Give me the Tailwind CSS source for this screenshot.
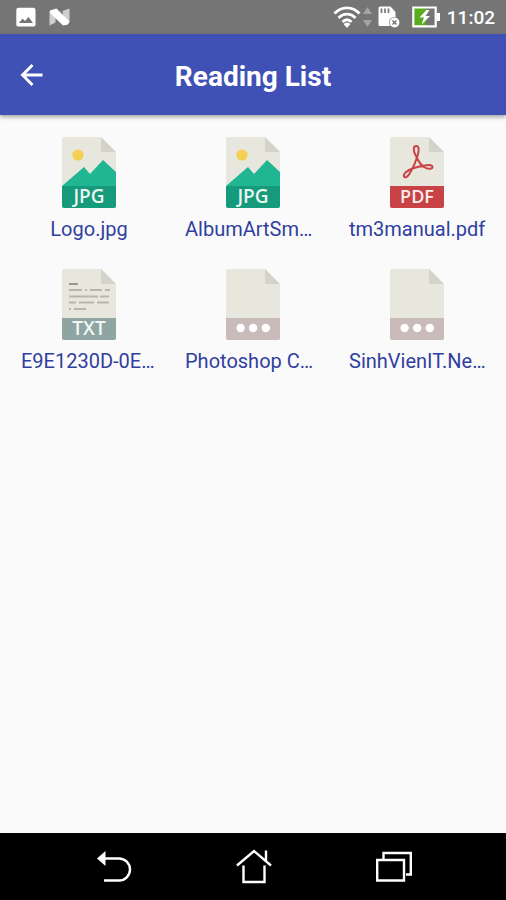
<!DOCTYPE html>
<html lang="en">
<head>
<meta charset="utf-8">
<meta name="viewport" content="width=device-width, initial-scale=1">
<title>Reading List</title>
<script src="https://cdn.jsdelivr.net/npm/@tailwindcss/browser@4"></script>
</head>
<body class="flex min-h-screen flex-col bg-[#fafafa] font-[Roboto,sans-serif]">
<svg class="hidden" aria-hidden="true">
  <symbol id="page" viewBox="0 0 54 71">
    <path fill="#e7e7de" d="M2 0H39L54 15V69a2 2 0 0 1-2 2H2a2 2 0 0 1-2-2V2a2 2 0 0 1 2-2z"/>
    <path fill="#d3d3c9" d="M39 0L54 15H41a2 2 0 0 1-2-2z"/>
  </symbol>
  <symbol id="band" viewBox="0 0 54 71">
    <path fill="currentColor" d="M0 49H54V69a2 2 0 0 1-2 2H2a2 2 0 0 1-2-2z"/>
  </symbol>
  <symbol id="jpg" viewBox="0 0 54 71">
    <use href="#page"/>
    <circle cx="16" cy="18" r="5.6" fill="#f4cf52"/>
    <path fill="#21b692" d="M0 49L22 30L28 37L41 23L54 35V50H0z"/>
    <use href="#band" color="#159a7b"/>
  </symbol>
  <symbol id="other" viewBox="0 0 54 71">
    <use href="#page"/>
    <use href="#band" color="#c8bbb9"/>
    <g fill="#fff"><circle cx="14.6" cy="59" r="4.2"/><circle cx="27.2" cy="59" r="4.2"/><circle cx="39.8" cy="59" r="4.2"/></g>
  </symbol>
</svg>

<div class="flex h-[34px] items-center justify-between bg-[#757575] pr-[11px] pl-4 text-white">
  <div class="flex items-center gap-[13px]">
    <svg class="h-5 w-5" viewBox="0 0 20 20"><rect x="0.3" y="0.8" width="19.2" height="18.8" rx="2.2" fill="#fff"/><path fill="#757575" d="M3 16L6.5 11.5L9 14L12.5 10L17 16z"/></svg>
    <svg class="h-[18px] w-[22px]" viewBox="0 0 22 18"><path fill="#cfcfcf" d="M0.5 3L6.5 6V14.500L0.5 17.500zM13.500 3L20.5 0.5V14L15 14z"/><path fill="#fff" d="M1 2.500L7.5 0.5L20.5 13.500L19 16.500L14 17.500L1 5z"/></svg>
  </div>
  <div class="flex items-center">
    <svg class="h-6 w-7" viewBox="0 0 28 24" fill="none" stroke="#fff" stroke-width="2.9"><path d="M1.5 8.5C8.500 1 19.500 1 26.500 8.500M5.500 13C10.500 7.800 17.500 7.800 22.500 13M9.500 17C12.500 14 15.500 14 18.500 17"/><path fill="#fff" stroke="none" d="M10.500 19Q14 16 17.500 19L14 23z"/></svg>
    <svg class="ml-[2px] h-[22px] w-[9px]" viewBox="0 0 9 22" fill="#a3a3a3"><path d="M4.500 1L9 8H0zM4.500 21L0 14H9z"/></svg>
    <svg class="ml-[6px] h-[22px] w-[22px]" viewBox="0 0 22 22"><path fill="#fff" d="M2 0.500H12.500L17.500 6V20H2A1.500 1.500 0 0 1 0.500 18.500V2A1.500 1.500 0 0 1 2 0.500z"/><path stroke="#757575" stroke-width="1.700" d="M3.500 2.500V7M7 2.500V7M10.500 2.500V7"/><circle cx="16.500" cy="16.500" r="5.500" fill="#757575"/><circle cx="16.500" cy="16.500" r="4.900" fill="#fff"/><path stroke="#757575" stroke-width="1.500" d="M14.500 14.500L18.500 18.500M18.500 14.500L14.500 18.500"/></svg>
    <svg class="ml-3 h-[22px] w-7" viewBox="0 0 28 22"><path fill="#58ac1d" d="M1.500 2H14V20H1.500z"/><path fill="none" stroke="#fff" stroke-width="2.200" d="M1.300 1.500H23.700V20.300H1.300z"/><path fill="#fff" d="M24.500 7H28V15H24.500zM14.500 4L7.500 11.500H12L9.500 18.500L18 10H13.500L17.500 4z"/></svg>
    <span class="ml-[7px] pt-[2px] text-[19px] leading-6 font-medium">11:02</span>
  </div>
</div>

<header class="z-10 grid h-[81px] grid-cols-[62px_1fr_62px] items-center bg-[#3f51b5] text-white shadow-[0_2px_4px_rgba(0,0,0,0.35)]">
  <button class="flex h-full items-center pl-5" aria-label="Back">
    <svg class="h-6 w-6" viewBox="0 0 24 24" fill="none" stroke="#fff" stroke-width="2.900"><path d="M12.500 2L2.500 12L12.500 22M2.500 12H22.500"/></svg>
  </button>
  <h1 class="pt-1 text-center text-[28px] leading-8 font-bold">Reading List</h1>
</header>

<main class="flex-1">
  <ul class="grid grid-cols-3 gap-y-[27px] px-[7px] pt-[22px] text-[20px] leading-[26px] text-[#303f9f]">
    <li><a href="#" class="flex flex-col items-center gap-2">
      <svg class="h-[71px] w-[54px]" viewBox="0 0 54 71"><use href="#jpg"/><text x="27" y="66" text-anchor="middle" class="fill-[#eaf6f2] font-['Open_Sans'] text-[19px] font-semibold">JPG</text></svg>
      <span class="w-[136px] text-center">Logo.jpg</span></a></li>
    <li><a href="#" class="flex flex-col items-center gap-2">
      <svg class="h-[71px] w-[54px]" viewBox="0 0 54 71"><use href="#jpg"/><text x="27" y="66" text-anchor="middle" class="fill-[#eaf6f2] font-['Open_Sans'] text-[19px] font-semibold">JPG</text></svg>
      <span class="w-[136px] whitespace-nowrap">AlbumArtSm…</span></a></li>
    <li><a href="#" class="flex flex-col items-center gap-2">
      <svg class="h-[71px] w-[54px]" viewBox="0 0 54 71"><use href="#page"/><use href="#band" color="#c94245"/>
        <path fill="none" stroke="#c94245" stroke-width="2" stroke-linejoin="round" d="M26 19C23 14 23 9 26.200 9C29.500 9 29 14 27.500 19C26 24 23.500 30 20.500 35C18 40 15 41.500 14 39.500C13 37 17 33.500 22.500 31.500C27 30 32 29 35 28.500C40 27.500 42.500 28.500 42.500 30C42.500 32 38 32.500 34 30C30 27.500 28 23.500 26 19z"/>
        <text x="27" y="66" text-anchor="middle" class="fill-[#fbeeee] font-['Open_Sans'] text-[18px] font-semibold">PDF</text></svg>
      <span class="w-[136px] text-center whitespace-nowrap">tm3manual.pdf</span></a></li>
    <li><a href="#" class="flex flex-col items-center gap-2">
      <svg class="h-[71px] w-[54px]" viewBox="0 0 54 71"><use href="#page"/><use href="#band" color="#8fa5a1"/>
        <path stroke="#b9b5ac" stroke-width="1.800" d="M7 21H20M23 21H25M28 21H40M43 21H48M7 27.500H36M38 27.500H47M7 33.500H14M17 33.500H32M35 33.500H47M7 40H9M12 40H24"/><path stroke="#9b9891" stroke-width="2" d="M7 15H16"/>
        <text x="27" y="66" text-anchor="middle" class="fill-[#f1f5f4] font-['Open_Sans'] text-[19px] font-semibold">TXT</text></svg>
      <span class="w-[136px] whitespace-nowrap">E9E1230D-0E…</span></a></li>
    <li><a href="#" class="flex flex-col items-center gap-2">
      <svg class="h-[71px] w-[54px]" viewBox="0 0 54 71"><use href="#other"/></svg>
      <span class="w-[136px] whitespace-nowrap">Photoshop C…</span></a></li>
    <li><a href="#" class="flex flex-col items-center gap-2">
      <svg class="h-[71px] w-[54px]" viewBox="0 0 54 71"><use href="#other"/></svg>
      <span class="w-[136px] whitespace-nowrap">SinhVienIT.Ne…</span></a></li>
  </ul>
</main>

<nav class="flex h-[67px] items-center justify-center gap-[104px] bg-black pl-[2px]" aria-label="System">
  <button aria-label="Back"><svg class="h-9 w-9" viewBox="0 0 36 36" fill="none" stroke="#fff" stroke-width="2.400"><path d="M9 9.500H23A11 11 0 0 1 23 31.500H8"/><path fill="#fff" stroke="none" d="M1 9.500L9.500 2V17z"/></svg></button>
  <button aria-label="Home"><svg class="h-9 w-9" viewBox="0 0 36 36" fill="none" stroke="#fff" stroke-width="2.400"><path d="M1 16.500L18 2L35 16.500M30 1.500V12M7.500 16.500V33H28.500V16.500"/></svg></button>
  <button aria-label="Recent apps"><svg class="h-9 w-9" viewBox="0 0 36 36" fill="none" stroke="#fff" stroke-width="2.400"><path d="M1.200 11H28V31.500H1.200zM7.500 10V4H34.800V25.500H30"/></svg></button>
</nav>
</body>
</html>
